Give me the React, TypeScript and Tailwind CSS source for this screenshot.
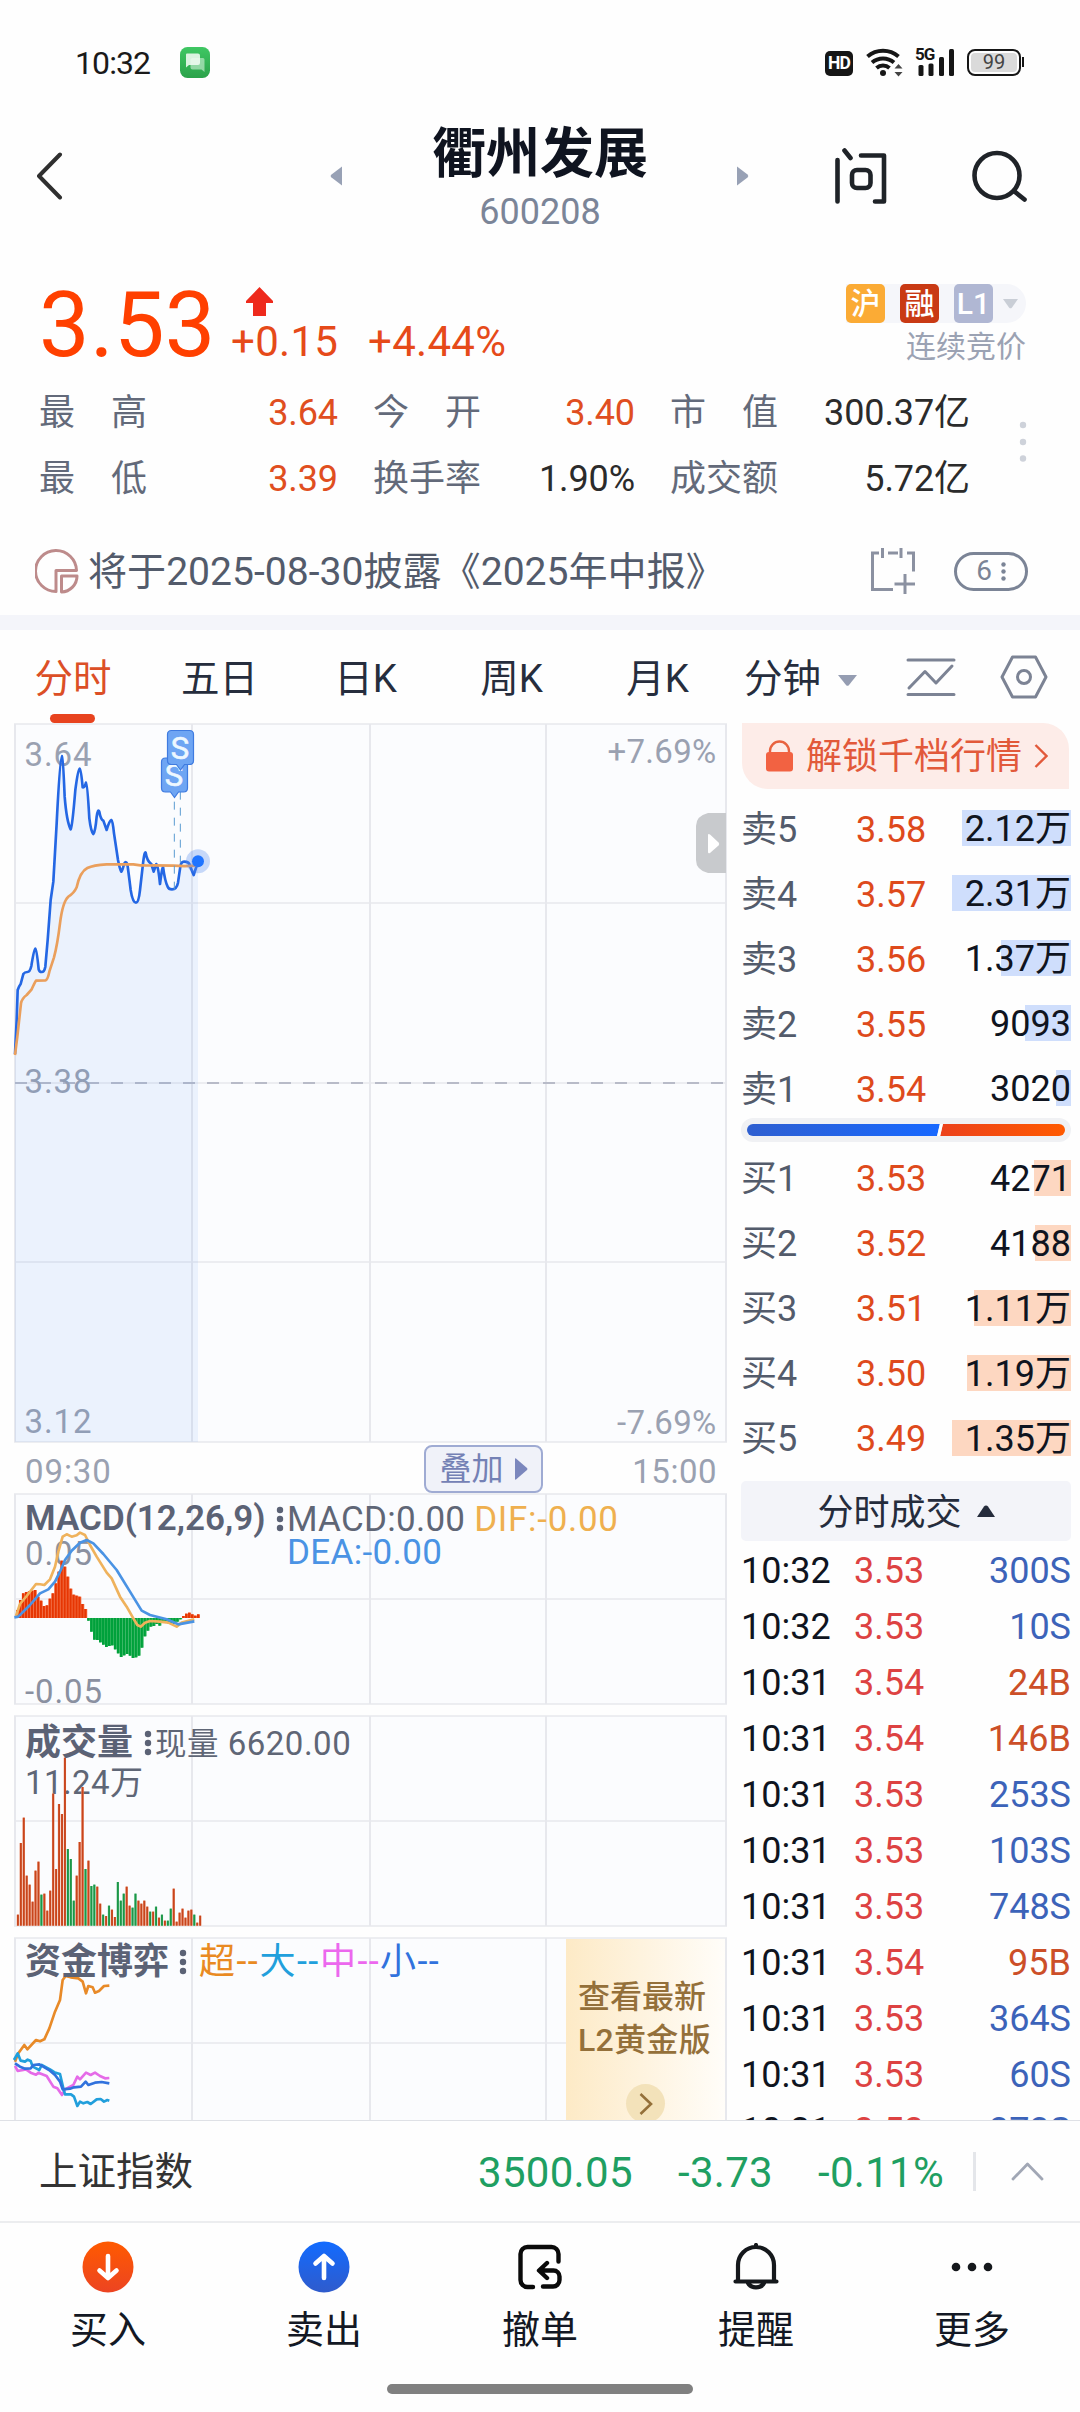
import React from "react";

const FONT = "font-['Roboto','Noto_Sans_CJK_SC',sans-serif]";

/* ---------- data ---------- */

const sells = [
  { label: "卖5", price: "3.58", qty: "2.12万", bar: 109 },
  { label: "卖4", price: "3.57", qty: "2.31万", bar: 119 },
  { label: "卖3", price: "3.56", qty: "1.37万", bar: 70 },
  { label: "卖2", price: "3.55", qty: "9093", bar: 46 },
  { label: "卖1", price: "3.54", qty: "3020", bar: 15 },
];

const buys = [
  { label: "买1", price: "3.53", qty: "4271", bar: 37 },
  { label: "买2", price: "3.52", qty: "4188", bar: 36 },
  { label: "买3", price: "3.51", qty: "1.11万", bar: 97 },
  { label: "买4", price: "3.50", qty: "1.19万", bar: 104 },
  { label: "买5", price: "3.49", qty: "1.35万", bar: 119 },
];

const trades: [string, string, string][] = [
  ["10:32", "3.53", "300S"],
  ["10:32", "3.53", "10S"],
  ["10:31", "3.54", "24B"],
  ["10:31", "3.54", "146B"],
  ["10:31", "3.53", "253S"],
  ["10:31", "3.53", "103S"],
  ["10:31", "3.53", "748S"],
  ["10:31", "3.54", "95B"],
  ["10:31", "3.53", "364S"],
  ["10:31", "3.53", "60S"],
  ["10:31", "3.53", "373S"],
];

const macdBars = [
  24, 54, 74, 78, 80, 82, 84, 64, 52, 36, 38, 58, 74, 104, 139, 172, 154, 124, 88, 70, 67, 64, 42, 27,
  -8, -41, -65, -66, -73, -80, -87, -84, -82, -94, -106, -117, -112, -108, -113, -120, -118, -113, -89,
  -55, -38, -26, -24, -18, -23, -13, -13, -16, -16, -18, -11, -4, 6, 13, 16, 11, 7, 11,
];

const volumeBars =
  "33r 248r 324r 150r 123r 72r 165r 192r 93g 96r 45r 105r 396r 170r 365r 335r 504r 230g 200g 75g 150r 251r 416r 170g 195r 119g 123g 117r 66r 33g 29r 60g 48r 26r 131g 75g 96g 117r 60r 54g 96g 75r 66r 75r 57r 42g 42r 57g 24r 33g 15r 15g 51g 111r 12r 39r 51r 24r 45r 48r 33g 9r 30r".split(" ");

/* ---------- small parts ---------- */

function Grid({ top, bottom, rows, height }: { top: number; bottom: number; rows: number[]; height: number }) {
  return (
    <g stroke="#e7e8ed" strokeWidth="2" fill="none">
      <rect x="15" y={top} width="711" height={bottom - top} fill="#fbfcfe" stroke="none" />
      {[15, 192, 370, 546, 726].map((x) => (
        <path key={x} d={`M${x} ${top}V${Math.min(bottom, top + height)}`} />
      ))}
      {[top, ...rows, bottom].map((y) => (
        <path key={y} d={`M14 ${y}H727`} strokeWidth="1.5" />
      ))}
    </g>
  );
}

function Dots() {
  return (
    <svg width="8" height="26" viewBox="0 0 8 26" fill="#5b6275">
      <circle cx="4" cy="4" r="3.2" />
      <circle cx="4" cy="13" r="3.2" />
      <circle cx="4" cy="22" r="3.2" />
    </svg>
  );
}

function StatusBar() {
  return (
    <div className="flex h-[124px] shrink-0 items-center pl-[75px] pr-[56px]">
      <span className="w-[105px] pt-[1px] text-[32px] leading-[36px] tracking-[-0.900px] text-[#1a1a1a]">10:32</span>
      <svg width="30" height="31" viewBox="0 0 30 31">
        <defs>
          <linearGradient id="msg" x1="0" y1="0" x2="0" y2="1">
            <stop offset="0" stopColor="#3fc763" />
            <stop offset="1" stopColor="#2ba24a" />
          </linearGradient>
        </defs>
        <rect width="30" height="31" rx="7.5" fill="url(#msg)" />
        <path d="M12 11h11a1.500 1.500 0 0 1 1.500 1.500V25l-3-2.500H12.500a2 2 0 0 1-2-2V12.500z" fill="#b4e6c0" opacity=".75" />
        <path d="M7 6.500h11a2 2 0 0 1 2 2V16a2 2 0 0 1-2 2H9l-3 2.500V7.500a1 1 0 0 1 1-1z" fill="#f1fbf3" opacity=".88" />
      </svg>
      <div className="ml-auto flex items-center">
        <div className="mt-[3px] flex h-[25px] w-[28px] items-center justify-center rounded-[5px] bg-[#161616] text-[17.500px] font-bold leading-none tracking-[-0.900px] text-white">
          HD
        </div>
        <svg className="ml-[13px]" width="38" height="30" viewBox="0 0 38 30" fill="none" stroke="#161616" strokeWidth="4">
          <path d="M1.500 9.500a24 24 0 0 1 31 0" />
          <path d="M6 15.500a17 17 0 0 1 22 0" />
          <path d="M10.500 21a10 10 0 0 1 13 0" />
          <circle cx="17" cy="26" r="3" fill="#161616" stroke="none" />
          <path d="M28.500 21.500h8l-4-4.500zM28.500 25h8l-4 4.500z" fill="#444" stroke="none" />
        </svg>
        <div className="relative ml-[11px] h-[30px] w-[39px]">
          <span className="absolute -top-[1px] left-0 text-[17px] font-bold leading-[17px] tracking-[-1px] text-[#161616]">5G</span>
          <svg width="39" height="30" viewBox="0 0 39 30" fill="#161616">
            <rect x="3.500" y="18" width="5" height="11" rx="1.500" />
            <rect x="13.500" y="16.500" width="5" height="12.500" rx="1.500" />
            <rect x="24" y="10" width="5" height="19" rx="1.500" />
            <rect x="34" y="2" width="5" height="27" rx="1.500" />
          </svg>
        </div>
        <div className="ml-[13px] flex items-center">
          <div className="flex h-[27px] w-[54px] rounded-[8px] border-2 border-[#161616] p-[2px]">
            <div className="flex flex-1 items-center justify-center rounded-[4px] bg-[#dadada] text-[20px] leading-none text-[#444]">99</div>
          </div>
          <div className="ml-[1px] h-[10px] w-[2px] bg-[#161616]" />
        </div>
      </div>
    </div>
  );
}

function Header() {
  return (
    <div className="flex h-[104px] shrink-0 items-center pl-[36px] pr-[52px]">
      <svg width="28" height="48" viewBox="0 0 28 48" fill="none" stroke="#2f2f2f" strokeWidth="4" strokeLinecap="round" strokeLinejoin="round">
        <path d="M24 2.500L3 24l21 21.500" />
      </svg>
      <svg className="ml-[266px]" width="13" height="20" viewBox="0 0 13 20" fill="#98a1b5">
        <path d="M12 .5v19L1.500 11.500a2 2 0 0 1 0-3z" />
      </svg>
      <div className="w-[394px] pt-[5px] text-center">
        <div className="text-[54px] font-bold leading-[54px] text-[#0f1420]">衢州发展</div>
        <div className="mt-[12px] text-[36px] leading-[36px] text-[#7b8598]">600208</div>
      </div>
      <svg width="13" height="20" viewBox="0 0 13 20" fill="#98a1b5">
        <path d="M0 .5v19l10.500-8a2 2 0 0 0 0-3z" />
      </svg>
      <svg className="ml-auto" width="52" height="56" viewBox="0 0 52 56" fill="none" stroke="#1f2328" strokeWidth="4.600" strokeLinecap="round" strokeLinejoin="round">
        <path d="M2.500 12v41.500M9.500 2.500l6 7.500M26 7.500h23v46H40" />
        <rect x="17" y="22" width="18.500" height="18" rx="5" />
      </svg>
      <svg className="ml-[85px]" width="56" height="52" viewBox="0 0 56 52" fill="none" stroke="#1f2328" strokeWidth="4.600" strokeLinecap="round">
        <circle cx="25" cy="25.500" r="22.500" />
        <path d="M42.500 41.500l10 8" />
      </svg>
    </div>
  );
}

function Quote() {
  return (
    <div className="flex h-[151px] shrink-0 justify-between pl-[39px] pr-[54px] pt-[53px]">
      <div className="flex h-[90px] items-baseline">
        <span className="w-[192px] text-[90px] leading-[90px] tracking-[0.300px] text-[#ff4000]">3.53</span>
        <span className="relative w-[137px] text-[42px] leading-[42px] tracking-[0.300px] text-[#e64a19]">
          +0.15
          <svg className="absolute -top-[34px] left-[15px]" width="27" height="31" viewBox="0 0 27 31">
            <path d="M13.500 0L27 14v2h-7v13H7V16H0v-2z" fill="#ee2a1c" />
          </svg>
        </span>
        <span className="text-[42px] leading-[42px] tracking-[0.300px] text-[#e64a19]">+4.44%</span>
      </div>
      <div className="flex flex-col items-end pt-[3px]">
        <div className="flex h-[39px] items-center gap-[15px] rounded-r-[20px] bg-[#f5f6fa] text-[30px] leading-[39px] text-white">
          <span className="w-[39px] rounded-[5px] bg-[#fbab35] text-center font-medium">沪</span>
          <span className="w-[39px] rounded-[5px] bg-[#c93a14] text-center font-medium">融</span>
          <span className="w-[39px] rounded-[5px] bg-[#b0b7d3] text-center font-medium">L1</span>
          <svg className="-ml-[5px] mr-[8px]" width="15" height="10" viewBox="0 0 15 10" fill="#c9ced6">
            <path d="M0 0h15L9 8.500a2 2 0 0 1-3 0z" />
          </svg>
        </div>
        <span className="mt-[6px] text-[30px] leading-[36px] text-[#9ba2b3]">连续竞价</span>
      </div>
    </div>
  );
}

function Stat({ name, value, up, w, nw }: { name: string; value: string; up?: boolean; w: string; nw?: string }) {
  return (
    <div className={`flex justify-between ${w} ${nw ?? ""}`}>
      <span className="flex w-[108px] justify-between text-[#636a7a]">
        {name.split("").map((c) => (
          <span key={c}>{c}</span>
        ))}
      </span>
      <span className={up ? "text-[#e04e20]" : "text-[#2b2b2b]"}>{value}</span>
    </div>
  );
}

function Stats() {
  return (
    <div className="relative h-[132px] shrink-0 pl-[39px] pt-[1px] text-[36px] leading-[66px] tracking-[-0.100px]">
      <div className="flex">
        <Stat name="最高" value="3.64" up w="w-[299px]" />
        <Stat name="今开" value="3.40" up w="w-[262px]" nw="ml-[35px]" />
        <Stat name="市值" value="300.37亿" w="w-[300px]" nw="ml-[35px]" />
      </div>
      <div className="flex">
        <Stat name="最低" value="3.39" up w="w-[299px]" />
        <Stat name="换手率" value="1.90%" w="w-[262px]" nw="ml-[35px]" />
        <Stat name="成交额" value="5.72亿" w="w-[300px]" nw="ml-[35px]" />
      </div>
      <svg className="absolute left-[1019px] top-[42px]" width="8" height="42" viewBox="0 0 8 42" fill="#ced2da">
        <circle cx="4" cy="4" r="3.200" />
        <circle cx="4" cy="21" r="3.200" />
        <circle cx="4" cy="37.500" r="3.200" />
      </svg>
    </div>
  );
}

function Notice() {
  return (
    <div className="flex h-[104px] shrink-0 items-center pl-[35px] pr-[50px] pt-[16px]">
      <svg width="44" height="46" viewBox="0 0 44 46" fill="none" stroke="#bd8b8b" strokeWidth="3" strokeLinejoin="round">
        <path d="M21 43.500A20.500 20.500 0 1 1 41.500 22.500H21z" />
        <path d="M26.500 28H42a16 16 0 0 1-15.500 16z" />
      </svg>
      <span className="ml-[9px] whitespace-nowrap pt-[1px] text-[39.100px] leading-[48px] text-[#535b6b]">将于2025-08-30披露《2025年中报》</span>
      <svg className="ml-auto" width="46" height="46" viewBox="0 0 46 46" fill="none" stroke="#8b91a1" strokeWidth="3">
        <path d="M9 5H2.500v36.500H23M18 5h10M37 5h6.500v18.500M12.500 0v10M31 0v10M24.500 36H45M35 26v20" />
      </svg>
      <div className="ml-[38px] mr-[2px] flex h-[39px] w-[74px] items-center justify-center gap-[9px] rounded-[20px] border-[3px] border-[#7b8496] text-[28px] leading-none text-[#7b8496]">
        6
        <svg width="5" height="19" viewBox="0 0 5 19" fill="#7b8496">
          <circle cx="2.500" cy="2.500" r="2.200" />
          <circle cx="2.500" cy="9.500" r="2.200" />
          <circle cx="2.500" cy="16.500" r="2.200" />
        </svg>
      </div>
    </div>
  );
}

function Tabs() {
  return (
    <div className="flex h-[93px] shrink-0 items-center text-[38.500px] leading-[48px] text-[#262d3d]">
      <div className="relative flex h-full w-[146px] items-center justify-center pt-[5px] text-[#dc4f26]">
        分时
        <div className="absolute bottom-0 left-[50px] h-[9px] w-[45px] rounded-full bg-[#e8431f]" />
      </div>
      {["五日", "日K", "周K", "月K"].map((t) => (
        <div key={t} className="w-[146px] pl-[1px] pt-[5px] text-center">
          {t}
        </div>
      ))}
      <span className="ml-[14px] pt-[5px]">分钟</span>
      <svg className="ml-[17px] mt-[9px]" width="19" height="12" viewBox="0 0 19 12" fill="#959db2">
        <path d="M0 0h19l-8 10a2 2 0 0 1-3 0z" />
      </svg>
      <svg className="ml-[49px]" width="50" height="40" viewBox="0 0 50 40" fill="none" stroke="#7c8394" strokeWidth="3" strokeLinecap="round" strokeLinejoin="round">
        <path d="M2 3h46M2 37.500h46M3 31L19 14.500 30 26 46 9" />
      </svg>
      <svg className="ml-[44px]" width="48" height="44" viewBox="0 0 48 44" fill="none" stroke="#7c8394" strokeWidth="3" strokeLinejoin="round">
        <path d="M12.500 2h23L46 22 35.500 42h-23L2 22z" />
        <circle cx="24" cy="22" r="6.500" />
      </svg>
    </div>
  );
}

/* ---------- charts ---------- */

function Flag({ x, y }: { x: number; y: number }) {
  return (
    <g>
      <path
        d={`M${x - 9} ${y}h18q4 0 4 4v26q0 4-4 4h-5l-4 5.500-4-5.500h-5q-4 0-4-4v-26q0-4 4-4z`}
        fill="#6ea5f3"
        stroke="#3f7be0"
        strokeWidth="1.200"
      />
      <text x={x} y={y + 28} fontSize="31" fill="#eef8ff" stroke="#eef8ff" strokeWidth=".6" textAnchor="middle">
        S
      </text>
    </g>
  );
}

function PriceChart() {
  const line =
    "M45 1062L50 960L53 870Q56 860 62 852L70 822Q74 816 82 816Q90 816 94 798Q102 748 106 746Q110 748 116 808Q118 816 125 816Q133 816 136 800L143 720L152 600L160 545L170 370Q180 170 186 168Q189 170 194 290Q200 365 212 388Q217 380 226 270Q234 208 239 206Q243 208 248 262Q254 264 258 248Q262 250 268 355Q273 395 280 402Q286 395 290 350Q294 325 298 335Q302 358 310 362L320 390Q328 362 334 360Q338 362 342 400L354 480Q360 510 364 515Q368 510 372 492Q377 480 382 492Q386 520 392 570Q398 608 408 608Q416 608 420 570L428 500Q433 452 437 458Q441 483 454 492L461 515L469 492Q475 500 480 552Q485 510 489 500Q495 545 503 560Q506 568 516 568Q530 568 534 548L541 500Q543 485 552 485Q568 485 570 498L581 525L594 485";
  return (
    <svg className="block" width="727" height="720" viewBox="0 723 727 720" fontSize="33" letterSpacing="0.900" fill="#9aa1b1">
      <Grid top={724} bottom={1442} rows={[903, 1083, 1262]} height={718} />
      <path d="M15 1083H726" stroke="#b8bbc8" strokeWidth="2" strokeDasharray="12 12" />
      <text x="24.500" y="766">3.64</text>
      <text x="24.500" y="1093">3.38</text>
      <text x="24.500" y="1433">3.12</text>
      <text x="716.500" y="763" textAnchor="end" letterSpacing=".3">+7.69%</text>
      <text x="716.500" y="1434" textAnchor="end" letterSpacing=".3">-7.69%</text>
      <g transform="translate(0 700) scale(.33333)" fill="none" strokeLinejoin="round">
        <path d={line + "V2226H45z"} fill="#2f7cf0" fillOpacity=".08" />
        <path d={line} stroke="#2467e4" strokeWidth="8" />
        <path
          d="M45 1065L52 1010L63 910Q66 895 80 885L95 868Q103 850 108 842L136 841Q143 840 148 815L162 772Q172 735 180 670Q188 605 205 590Q222 580 230 562Q240 515 262 504Q280 495 320 493L400 493Q430 498 460 496L520 497Q560 500 594 496"
          stroke="#ea9f5c"
          strokeWidth="8"
        />
        <path d="M523 305V572M541 275V488" stroke="#5a9cd2" strokeWidth="3" strokeDasharray="24 24" />
        <circle cx="594" cy="484" r="36" fill="#5b8ff0" fillOpacity=".33" />
        <circle cx="594" cy="484" r="18" fill="#1f74ff" />
      </g>
      <Flag x={174.500} y={758} />
      <Flag x={180.500} y={730.500} />
      <path d="M726 813h-18q-12 3-12 13v34q0 10 12 13h18z" fill="#c8cacd" />
      <path d="M708 835v17q0 2 2 1l8.500-7.500q1.500-1.500 0-3L710 834.500q-2-1-2 .5z" fill="#fff" />
    </svg>
  );
}

function TimeAxis() {
  return (
    <div className="flex h-[50px] w-[717px] items-center justify-between pl-[25px] text-[33px] leading-[50px] tracking-[0.900px] text-[#9aa1b1]">
      <span className="w-[399px] pt-[8px]">09:30</span>
      <div className="mt-[2px] flex h-[48px] w-[119px] items-center justify-center gap-[11px] rounded-[8px] border-2 border-[#9fabd3] bg-[#f0f2f9] text-[32px] tracking-normal text-[#7481b5]">
        叠加
        <svg width="13" height="22" viewBox="0 0 13 22" fill="#7b87bd">
          <path d="M0 1v20q0 1 1 .5L12 12q1-1 0-2L1 .5q-1-.5-1 .5z" />
        </svg>
      </div>
      <span className="ml-auto pt-[8px] tracking-[0.500px]">15:00</span>
    </div>
  );
}

function MacdChart() {
  return (
    <div className="relative h-[221px]">
      <svg className="block" width="727" height="213" viewBox="0 1493 727 213" fontSize="33" letterSpacing="0.900" fill="#8a90a0">
        <Grid top={1494} bottom={1704} rows={[1599]} height={210} />
        <text x="25" y="1565">0.05</text>
        <text x="25" y="1702.500">-0.05</text>
        <g transform="translate(0 1380) scale(.33333)" fill="none" strokeLinejoin="round">
          {macdBars.map((v, i) => {
            const x = 48 + i * 8.9;
            const y = v > 0 ? 714 - v : 714;
            return (
              <g key={i}>
                <rect x={x} y={y} width="9" height={Math.abs(v)} fill={v > 0 ? "#f4683a" : "#30b45c"} />
                <rect x={x} y={y} width="6.500" height={Math.abs(v)} fill={v > 0 ? "#e63603" : "#00a13b"} />
              </g>
            );
          })}
          <path
            d="M48 708L60 672L80 648L108 612Q120 612 133 615L150 598L165 560L175 515L188 470L200 463L215 470L230 466L240 458L255 465L270 495L290 530L320 578L335 595L360 650L380 680L400 715L412 735L422 740L435 728L450 723L480 725L505 728L530 740L545 728L583 718"
            stroke="#efb25c"
            strokeWidth="8"
          />
          <path
            d="M43 712L55 710L90 675L120 640L145 628L165 605L180 575L195 540L215 512L240 488L260 480L280 490L310 522L350 570L390 635L425 692L450 705L500 718L535 733L583 724"
            stroke="#4a93e4"
            strokeWidth="8"
          />
        </g>
      </svg>
      <div className="absolute left-[25px] top-[5px] flex items-start text-[36px] leading-[40px] text-[#5b6275]">
        <span className="w-[251px] pt-[1px] text-[35px] font-semibold">MACD(12,26,9)</span>
        <div className="mt-[8px] w-[11px]">
          <Dots />
        </div>
        <div className="text-[35px] leading-[33px] tracking-[0.250px] text-[#5f6676]">
          <div className="whitespace-nowrap pt-[5px]">
            MACD:0.00 <span className="tracking-[0.700px] text-[#efb04f]">DIF:-0.00</span>
          </div>
          <div className="tracking-[0.350px] text-[#4a93e4]">DEA:-0.00</div>
        </div>
      </div>
    </div>
  );
}

function VolumeChart() {
  return (
    <div className="relative h-[222px]">
      <svg className="block" width="727" height="213" viewBox="0 1714 727 213" fontSize="33" letterSpacing="0.400" fill="#5f6676">
        <Grid top={1716} bottom={1926} rows={[1821]} height={210} />
        <text x="25" y="1794">11.24万</text>
        <g transform="translate(0 1700) scale(.33333)">
          {volumeBars.map((s, i) => {
            const h = parseInt(s, 10);
            const up = s.endsWith("r");
            return (
              <g key={i}>
                <rect x={50 + i * 8.82} y={677 - h} width="7" height={h} fill={up ? "#ee9676" : "#74cb94"} />
                <rect x={51 + i * 8.82} y={677 - h} width="5.500" height={h} fill={up ? "#c8451c" : "#1c9648"} />
              </g>
            );
          })}
        </g>
      </svg>
      <div className="absolute left-[25px] top-[6px] flex items-center text-[36px] leading-[42px] text-[#5b6275]">
        <span className="w-[119px] font-bold">成交量</span>
        <div className="w-[11px]">
          <Dots />
        </div>
        <span className="pt-[3px] text-[33px] tracking-[0.500px] text-[#5f6676]">
          <span className="text-[31.500px]">现量</span> 6620.00
        </span>
      </div>
    </div>
  );
}

function CapitalChart() {
  return (
    <div className="relative h-[184px] overflow-hidden">
      <svg className="block" width="727" height="184" viewBox="0 1936 727 184">
        <Grid top={1938} bottom={2148} rows={[2043]} height={210} />
        <g transform="translate(0 1700) scale(.33333)" fill="none" strokeWidth="8" strokeLinejoin="round">
          <path
            d="M45 1085L55 1060L73 1035L82 1048L108 1020L120 1024L133 1018L148 985L165 935L180 900L188 840L197 828L212 832L235 835L248 845L258 880L265 858L278 862L285 878L297 873L312 858L328 857"
            stroke="#e88a28"
          />
          <path
            d="M45 1098L53 1113L78 1108L92 1118L108 1124L115 1118L140 1128L160 1160L172 1165L186 1185L195 1168L220 1155L232 1130L240 1138L258 1118L272 1125L285 1118L300 1128L315 1135L328 1134"
            stroke="#e56be8"
          />
          <path
            d="M42 1080L53 1060L62 1082L75 1085L83 1079L92 1083L98 1100L118 1110L125 1095L150 1108L165 1118L180 1122L190 1165L195 1183L213 1183L222 1190L232 1218L240 1205L250 1210L262 1206L272 1212L290 1198L302 1197L312 1205L322 1200L328 1202"
            stroke="#219fdc"
          />
          <path
            d="M45 1090L60 1100L75 1106L92 1105L100 1095L118 1093L150 1112L165 1125L180 1145L188 1168L210 1166L222 1162L243 1160L257 1145L265 1155L285 1148L305 1146L328 1150"
            stroke="#3172dd"
          />
        </g>
      </svg>
      <div className="absolute left-[25px] top-[5px] flex items-center whitespace-nowrap text-[36px] leading-[42px]">
        <span className="w-[154px] font-bold text-[#5b6275]">资金博弈</span>
        <div className="w-[20px]">
          <Dots />
        </div>
        <span className="w-[60.500px] tracking-[1.400px] text-[#e98a22]">超--</span>
        <span className="w-[60.500px] tracking-[1.400px] text-[#219fdc]">大--</span>
        <span className="w-[60px] tracking-[1.400px] text-[#ec68ee]">中--</span>
        <span className="tracking-[1.400px] text-[#3172dd]">小--</span>
      </div>
      <div className="absolute left-[566px] top-[3px] h-[181px] w-[159px] bg-linear-to-r from-[#fdeac6] to-[#fffdf9] pl-[12px] pt-[37px] text-[32px] font-medium leading-[43px] text-[#94703a]">
        <div>查看最新</div>
        <div className="whitespace-nowrap tracking-[0.300px]">L2黄金版</div>
        <div className="ml-[48px] mt-[22px] flex h-[39px] w-[39px] items-center justify-center rounded-full bg-[#f3e2ba]">
          <svg width="14" height="22" viewBox="0 0 14 22" fill="none" stroke="#94703a" strokeWidth="2.600">
            <path d="M1.500 1L12 11 1.500 21" />
          </svg>
        </div>
      </div>
    </div>
  );
}

/* ---------- order book ---------- */

function Level({ label, price, qty, bar, sell }: { label: string; price: string; qty: string; bar: number; sell?: boolean }) {
  return (
    <div className="flex h-[65px] items-center leading-[36px]">
      <span className="w-[115px] pt-[3px] text-[#535b6b]">{label}</span>
      <span className="pt-[3px] text-[#de4a1c]">{price}</span>
      <div className="relative ml-auto h-[36px] w-[119px] text-right text-[#0f1420]">
        <div className={`absolute right-0 top-0 h-[36px] ${sell ? "bg-[#cfdefc]" : "bg-[#fdd7c1]"}`} style={{ width: bar }} />
        <div className="relative pt-[1px]">{qty}</div>
      </div>
    </div>
  );
}

function OrderBook() {
  return (
    <div className="flex h-full w-[330px] flex-col overflow-hidden text-[36px]">
      <div className="ml-[1px] flex h-[66px] w-[327px] shrink-0 items-center rounded-bl-[26px] rounded-tr-[26px] bg-[#fdece8] pl-[24px] text-[#e2593a]">
        <svg width="27" height="32" viewBox="0 0 27 32">
          <path d="M4 14V11a9.500 9.500 0 0 1 19 0v3" fill="none" stroke="#e8623f" strokeWidth="2.400" />
          <rect y="12" width="27" height="19.500" rx="3" fill="#f26242" />
        </svg>
        <span className="ml-[13px] whitespace-nowrap pt-[2px] leading-[40px]">解锁千档行情</span>
        <svg className="ml-[12px]" width="14" height="24" viewBox="0 0 14 24" fill="none" stroke="#e2593a" strokeWidth="2.400">
          <path d="M1.500 1L12.500 12 1.500 23" />
        </svg>
      </div>
      <div className="mt-[6.500px]">
        {sells.map((s) => (
          <Level key={s.label} {...s} sell />
        ))}
      </div>
      <div className="-mt-[2.500px] flex h-[24px] shrink-0 items-center rounded-full bg-[#f0f1f4] px-[6px]">
        <svg width="318" height="12" viewBox="0 0 318 12">
          <defs>
            <linearGradient id="blue">
              <stop offset="0" stopColor="#2f5fd0" />
              <stop offset="1" stopColor="#1768ff" />
            </linearGradient>
            <linearGradient id="red">
              <stop offset="0" stopColor="#ec421c" />
              <stop offset="1" stopColor="#ff5a00" />
            </linearGradient>
          </defs>
          <path d="M6 0h187l-3 12H6A6 6 0 0 1 6 0z" fill="url(#blue)" />
          <path d="M196 0h116a6 6 0 0 1 0 12H193z" fill="url(#red)" />
          <path d="M194.500 -1l-3 14" stroke="#fff" strokeWidth="3" />
        </svg>
      </div>
      <div className="mt-[3px]">
        {buys.map((b) => (
          <Level key={b.label} {...b} />
        ))}
      </div>
      <div className="mt-[11px] flex h-[60px] shrink-0 items-center justify-center gap-[15px] rounded-[5px] bg-[#f3f4f9] text-[#252c3c]">
        <span className="pt-[3px] leading-[40px]">分时成交</span>
        <svg width="18" height="12" viewBox="0 0 18 12" fill="#252c3c">
          <path d="M0 12h18L11 1.500a2.500 2.500 0 0 0-4 0z" />
        </svg>
      </div>
      <div className="mt-[2px]">
        {trades.map(([time, price, qty], i) => (
          <div key={i} className="flex h-[56px] items-center leading-[56px]">
            <span className="w-[113px] text-[#0f1420]">{time}</span>
            <span className="text-[#dd4242]">{price}</span>
            <span className={`ml-auto ${qty.endsWith("S") ? "text-[#3c63b9]" : "text-[#cc4f28]"}`}>{qty}</span>
          </div>
        ))}
      </div>
    </div>
  );
}

/* ---------- bottom ---------- */

function IndexBar() {
  return (
    <div className="flex h-[103px] shrink-0 items-center border-b-2 border-t border-b-[#ecedef] border-t-[#dfe1e6] pl-[39px] pr-[36px] text-[42px] leading-[48px] tracking-[0.300px] text-[#1f9f62]">
      <span className="w-[439px] pt-[2px] text-[38.500px] tracking-normal text-[#333]">上证指数</span>
      <span className="w-[200px] pt-[3px]">3500.05</span>
      <span className="w-[140px] pt-[3px]">-3.73</span>
      <span className="pt-[3px]">-0.11%</span>
      <div className="ml-auto h-[39px] w-[3px] bg-[#e4e6ea]" />
      <svg className="ml-[35px]" width="33" height="19" viewBox="0 0 33 19" fill="none" stroke="#a1a7b5" strokeWidth="2.800" strokeLinecap="round" strokeLinejoin="round">
        <path d="M2 17L16.500 2 31 17" />
      </svg>
    </div>
  );
}

function NavItem({ label, children }: { label: string; children: React.ReactNode }) {
  return (
    <div className="flex flex-1 flex-col items-center text-[38px] leading-[44px] text-[#131824]">
      <div className="flex h-[51px] items-center">{children}</div>
      <span className="mt-[16px]">{label}</span>
    </div>
  );
}

function BottomNav() {
  return (
    <div className="flex h-[161px] shrink-0 pt-[18px]">
      <NavItem label="买入">
        <svg width="52" height="52" viewBox="0 0 52 52" fill="none" stroke="#fff" strokeWidth="4.600" strokeLinecap="round" strokeLinejoin="round">
          <defs>
            <linearGradient id="buy" x1="0" y1="0" x2="0" y2="1">
              <stop offset="0" stopColor="#ff5a00" />
              <stop offset="1" stopColor="#ec4422" />
            </linearGradient>
          </defs>
          <circle cx="26" cy="26" r="25.500" fill="url(#buy)" stroke="none" />
          <path d="M26 15v22M17.500 29.500L26 37l8.500-7.500" />
        </svg>
      </NavItem>
      <NavItem label="卖出">
        <svg width="52" height="52" viewBox="0 0 52 52" fill="none" stroke="#fff" strokeWidth="4.600" strokeLinecap="round" strokeLinejoin="round">
          <defs>
            <linearGradient id="sell" x1="0" y1="0" x2="0" y2="1">
              <stop offset="0" stopColor="#126bff" />
              <stop offset="1" stopColor="#2f5bcc" />
            </linearGradient>
          </defs>
          <circle cx="26" cy="26" r="25.500" fill="url(#sell)" stroke="none" />
          <path d="M26 37V15M17.500 22.500L26 15l8.500 7.500" />
        </svg>
      </NavItem>
      <NavItem label="撤单">
        <svg width="44" height="46" viewBox="0 0 44 46" fill="none" stroke="#0a0a0a" strokeWidth="4.400" strokeLinecap="round" strokeLinejoin="round">
          <path d="M40.500 17.500V10a7 7 0 0 0-7-7h-24a7 7 0 0 0-7 7v26a7 7 0 0 0 7 7H15M29 19l-8 7.500 8 7.500M22 26.500h13.500a6 6 0 0 1 6 6V36a6.500 6.500 0 0 1-6.500 6.500H25" />
        </svg>
      </NavItem>
      <NavItem label="提醒">
        <svg width="46" height="48" viewBox="0 0 46 48" fill="none" stroke="#15181c" strokeWidth="4.200" strokeLinecap="round" strokeLinejoin="round">
          <path d="M5 37V22a18 18 0 0 1 36 0v15M2.500 38.500h41M15 40a8.500 6.500 0 0 0 16 0M23 2v2" />
        </svg>
      </NavItem>
      <NavItem label="更多">
        <svg width="42" height="10" viewBox="0 0 42 10" fill="#15181c">
          <circle cx="5" cy="5" r="4.300" />
          <circle cx="21" cy="5" r="4.300" />
          <circle cx="37" cy="5" r="4.300" />
        </svg>
      </NavItem>
    </div>
  );
}

export default function App() {
  return (
    <div className={`flex h-[2412px] w-[1080px] flex-col overflow-hidden bg-[#fefefe] ${FONT}`}>
      <StatusBar />
      <Header />
      <Quote />
      <Stats />
      <Notice />
      <div className="h-[15px] shrink-0 bg-[#f4f5fa]" />
      <Tabs />
      <div className="flex h-[1397px] shrink-0 overflow-hidden">
        <div className="w-[741px] shrink-0">
          <PriceChart />
          <TimeAxis />
          <MacdChart />
          <VolumeChart />
          <CapitalChart />
        </div>
        <OrderBook />
      </div>
      <IndexBar />
      <BottomNav />
      <div className="mx-auto h-[10px] w-[306px] shrink-0 rounded-full bg-[#808080]" />
    </div>
  );
}
